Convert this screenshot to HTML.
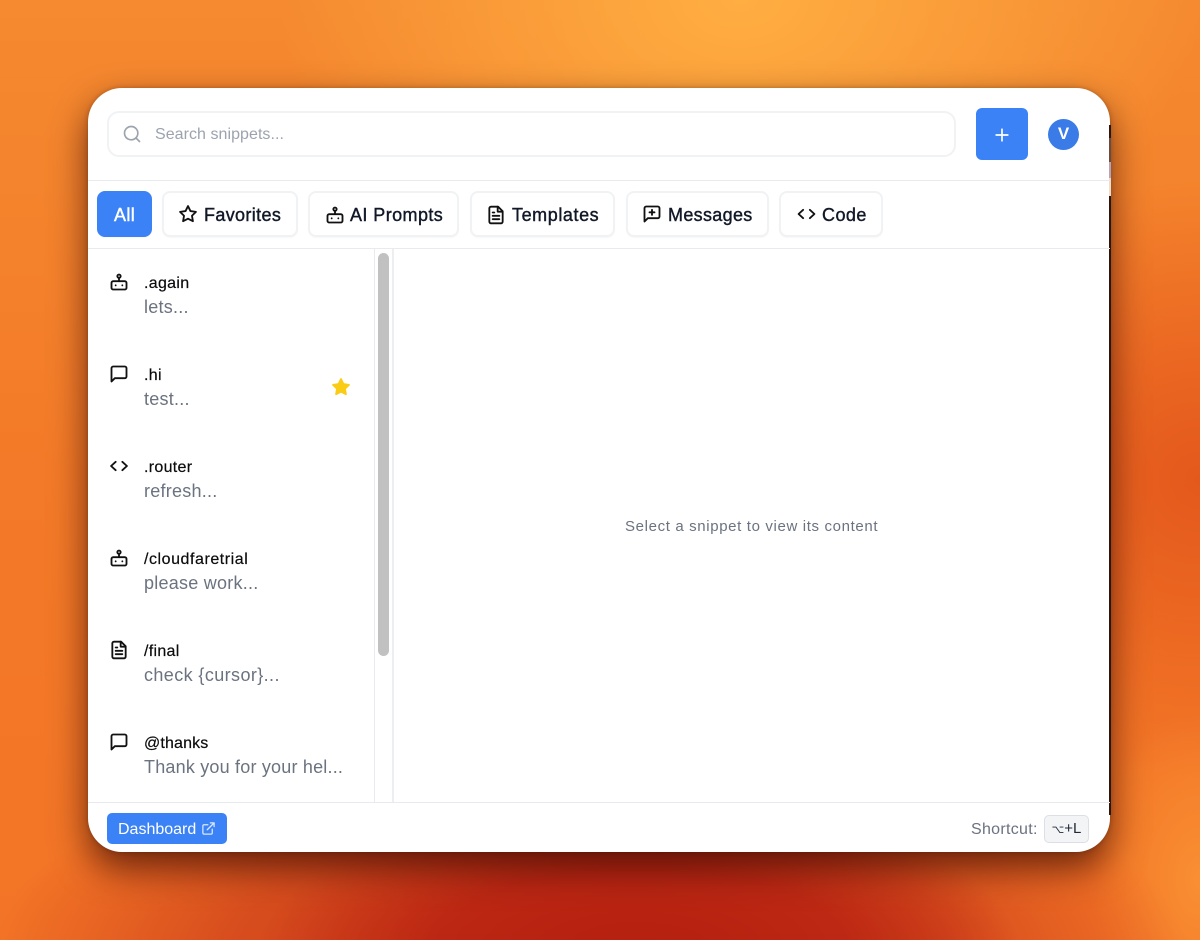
<!DOCTYPE html>
<html><head><meta charset="utf-8">
<style>
*{box-sizing:border-box;margin:0;padding:0}
html,body{width:1200px;height:940px;overflow:hidden}
body{position:relative;font-family:"Liberation Sans",sans-serif;
background:
radial-gradient(ellipse 380px 150px at 640px 950px,#b5200f 0%,rgba(185,35,18,.85) 55%,rgba(200,60,25,0) 100%),
radial-gradient(ellipse 600px 230px at 590px 960px,rgba(200,55,25,1) 0%,rgba(210,70,28,.85) 60%,rgba(225,90,30,0) 100%),
radial-gradient(ellipse 110px 170px at 1200px 880px,#f98f33 0%,rgba(249,143,51,0) 100%),
radial-gradient(ellipse 300px 300px at 1200px 480px,#e4581c 0%,rgba(228,88,28,0) 100%),
radial-gradient(ellipse 460px 320px at 740px 0px,#ffae42 0%,rgba(255,174,66,0) 100%),
linear-gradient(180deg,#f58a30 0%,#f37a28 50%,#f37426 100%);}
.a{position:absolute}
#win{left:88px;top:88px;width:1022px;height:764px;background:#fff;border-radius:34px;box-shadow:0 16px 36px rgba(45,5,0,.68),0 0 5px rgba(60,30,0,.3);overflow:hidden}
#edge{left:1109px;top:125px;width:2px;height:690px;background:#2a1712}
.t{position:absolute;white-space:nowrap;line-height:20px}
.line{position:absolute;background:#e8eaed}
.tab{position:absolute;top:191px;height:46px;background:#fff;border:2px solid #f1f2f4;border-radius:8px;box-shadow:0 1px 1px rgba(0,0,0,.03)}
.tl{position:absolute;top:205px;font-size:18px;font-weight:400;color:#111827;white-space:nowrap;line-height:20px;-webkit-text-stroke:.4px #111827}
svg{position:absolute;fill:none;stroke:#111;stroke-width:2.2;stroke-linecap:round;stroke-linejoin:round}
.n{position:absolute;left:144px;font-size:16px;color:#0c0c0c;white-space:nowrap;line-height:18px;letter-spacing:.3px;-webkit-text-stroke:.2px #0c0c0c}
.d{position:absolute;left:144px;font-size:18px;color:#6b7280;white-space:nowrap;line-height:22px;letter-spacing:.25px}
</style></head><body>
<div id="win" class="a"></div>
<div id="edge" class="a"></div>
<div class="a" style="left:1109px;top:138px;width:2px;height:24px;background:#6b4a40"></div>
<div class="a" style="left:1109px;top:162px;width:2px;height:16px;background:#b3a3bb"></div>
<div class="a" style="left:1109px;top:178px;width:2px;height:18px;background:#ecdccc"></div>

<!-- search -->
<div class="a" style="left:107px;top:111px;width:849px;height:46px;border:2px solid #f1f2f4;border-radius:12px;background:#fff"></div>
<svg style="left:122px;top:124px;stroke:#9ca3af;stroke-width:2" width="20" height="20" viewBox="0 0 24 24"><circle cx="11" cy="11" r="8"/><path d="m21 21-4.3-4.3"/></svg>
<div class="t" style="left:155px;top:125px;font-size:16px;color:#9ca3af;letter-spacing:.05px">Search snippets...</div>

<!-- add -->
<div class="a" style="left:976px;top:108px;width:52px;height:52px;background:#3b82f6;border-radius:6px"></div>
<svg style="left:992px;top:125px;stroke:#fff;stroke-width:2" width="20" height="20" viewBox="0 0 24 24"><path d="M5 12h14M12 5v14"/></svg>
<!-- avatar -->
<div class="a" style="left:1048px;top:119px;width:31px;height:31px;border-radius:50%;background:#3b7be8;color:#fff;font-size:17px;font-weight:bold;text-align:center;line-height:30px">V</div>

<div class="line" style="left:88px;top:180px;width:1022px;height:1px"></div>

<!-- tabs -->
<div class="tab" style="left:97px;width:55px;background:#3b82f6;border-color:#3b82f6"></div>
<div class="tl" style="left:114px;top:205px;color:#fff;-webkit-text-stroke:.4px #fff;letter-spacing:.4px">All</div>

<div class="tab" style="left:162px;width:136px"></div>
<svg style="left:178px;top:204px" width="20" height="20" viewBox="0 0 24 24"><path d="M12 2.500l2.950 5.980 6.600.96-4.780 4.650 1.130 6.570L12 17.560l-5.900 3.100 1.130-6.570L2.450 9.440l6.600-.96z"/></svg>
<div class="tl" style="left:204px;letter-spacing:.35px">Favorites</div>

<div class="tab" style="left:308px;width:151px"></div>
<svg style="left:325px;top:205px" width="20" height="20" viewBox="0 0 24 24"><rect x="3" y="11" width="18" height="10" rx="2"/><circle cx="12" cy="5" r="2"/><path d="M12 7v4M8 16h0M16 16h0"/></svg>
<div class="tl" style="left:350px;letter-spacing:.42px">AI Prompts</div>

<div class="tab" style="left:470px;width:145px"></div>
<svg style="left:486px;top:205px" width="20" height="20" viewBox="0 0 24 24"><path d="M14.500 2H6a2 2 0 0 0-2 2v16a2 2 0 0 0 2 2h12a2 2 0 0 0 2-2V7.500z"/><path d="M14 2v6h6M16 13H8M16 17H8M10 9H8"/></svg>
<div class="tl" style="left:512px;letter-spacing:.58px">Templates</div>

<div class="tab" style="left:626px;width:143px"></div>
<svg style="left:642px;top:204px" width="20" height="20" viewBox="0 0 24 24"><path d="M21 15a2 2 0 0 1-2 2H7l-4 4V5a2 2 0 0 1 2-2h14a2 2 0 0 1 2 2z"/><path d="M12 7v6M9 10h6"/></svg>
<div class="tl" style="left:668px;letter-spacing:.32px">Messages</div>

<div class="tab" style="left:779px;width:104px"></div>
<svg style="left:796px;top:204px" width="21" height="20" viewBox="0 0 24 24"><path d="m16 17 5.500-5-5.500-5M8 7l-5.500 5 5.500 5"/></svg>
<div class="tl" style="left:822px;letter-spacing:.45px">Code</div>

<div class="line" style="left:88px;top:248px;width:1022px;height:1px"></div>

<!-- sidebar structure -->
<div class="line" style="left:374px;top:249px;width:1px;height:553px"></div>
<div class="a" style="left:378px;top:253px;width:11px;height:403px;border-radius:6px;background:#c1c1c1"></div>
<div class="a" style="left:392px;top:249px;width:2px;height:553px;background:#eceef0"></div>

<!-- items -->
<svg style="left:109px;top:272px" width="20" height="20" viewBox="0 0 24 24"><rect x="3" y="11" width="18" height="10" rx="2"/><circle cx="12" cy="5" r="2"/><path d="M12 7v4M8 16h0M16 16h0"/></svg>
<div class="n" style="top:275px">.again</div>
<div class="d" style="top:296px">lets...</div>

<svg style="left:109px;top:364px" width="20" height="20" viewBox="0 0 24 24"><path d="M21 15a2 2 0 0 1-2 2H7l-4 4V5a2 2 0 0 1 2-2h14a2 2 0 0 1 2 2z"/></svg>
<div class="n" style="top:367px">.hi</div>
<div class="d" style="top:388px">test...</div>
<svg style="left:331px;top:377px;fill:#facc15;stroke:#facc15" width="20" height="20" viewBox="0 0 24 24"><path d="M12 2.500l2.950 5.980 6.600.96-4.780 4.650 1.130 6.570L12 17.560l-5.900 3.100 1.130-6.570L2.450 9.440l6.600-.96z"/></svg>

<svg style="left:109px;top:456px" width="20" height="20" viewBox="0 0 24 24"><path d="m16 17 5.500-5-5.500-5M8 7l-5.500 5 5.500 5"/></svg>
<div class="n" style="top:459px">.router</div>
<div class="d" style="top:480px">refresh...</div>

<svg style="left:109px;top:548px" width="20" height="20" viewBox="0 0 24 24"><rect x="3" y="11" width="18" height="10" rx="2"/><circle cx="12" cy="5" r="2"/><path d="M12 7v4M8 16h0M16 16h0"/></svg>
<div class="n" style="top:551px;letter-spacing:.55px">/cloudfaretrial</div>
<div class="d" style="top:572px">please work...</div>

<svg style="left:109px;top:640px" width="20" height="20" viewBox="0 0 24 24"><path d="M14.500 2H6a2 2 0 0 0-2 2v16a2 2 0 0 0 2 2h12a2 2 0 0 0 2-2V7.500z"/><path d="M14 2v6h6M16 13H8M16 17H8M10 9H8"/></svg>
<div class="n" style="top:643px">/final</div>
<div class="d" style="top:664px;letter-spacing:.4px">check {cursor}...</div>

<svg style="left:109px;top:732px" width="20" height="20" viewBox="0 0 24 24"><path d="M21 15a2 2 0 0 1-2 2H7l-4 4V5a2 2 0 0 1 2-2h14a2 2 0 0 1 2 2z"/></svg>
<div class="n" style="top:735px;letter-spacing:.15px">@thanks</div>
<div class="d" style="top:756px;letter-spacing:.2px">Thank you for your hel...</div>

<div class="t" style="left:625px;top:517px;font-size:15px;color:#6b7280;letter-spacing:.64px">Select a snippet to view its content</div>

<!-- footer -->
<div class="line" style="left:88px;top:802px;width:1022px;height:1px"></div>
<div class="a" style="left:107px;top:813px;width:120px;height:31px;border-radius:5px;background:#3b82f6"></div>
<div class="t" style="left:118px;top:820px;font-size:16px;color:#fff">Dashboard</div>
<svg style="left:201px;top:821px;stroke:#dbe8fe;stroke-width:2" width="15" height="15" viewBox="0 0 24 24"><path d="M18 13v6a2 2 0 0 1-2 2H5a2 2 0 0 1-2-2V8a2 2 0 0 1 2-2h6M15 3h6v6M10 14 21 3"/></svg>
<div class="t" style="left:971px;top:820px;font-size:16px;color:#6b7280;letter-spacing:.3px">Shortcut:</div>
<div class="a" style="left:1044px;top:815px;width:45px;height:28px;border:1px solid #dcdfe4;border-radius:5px;background:#f3f4f6;color:#1f2937;font-size:15px;text-align:center;line-height:26px;font-family:'Liberation Sans','DejaVu Sans',sans-serif"><span style="font-size:11px">⌥</span>+L</div>
</body></html>
